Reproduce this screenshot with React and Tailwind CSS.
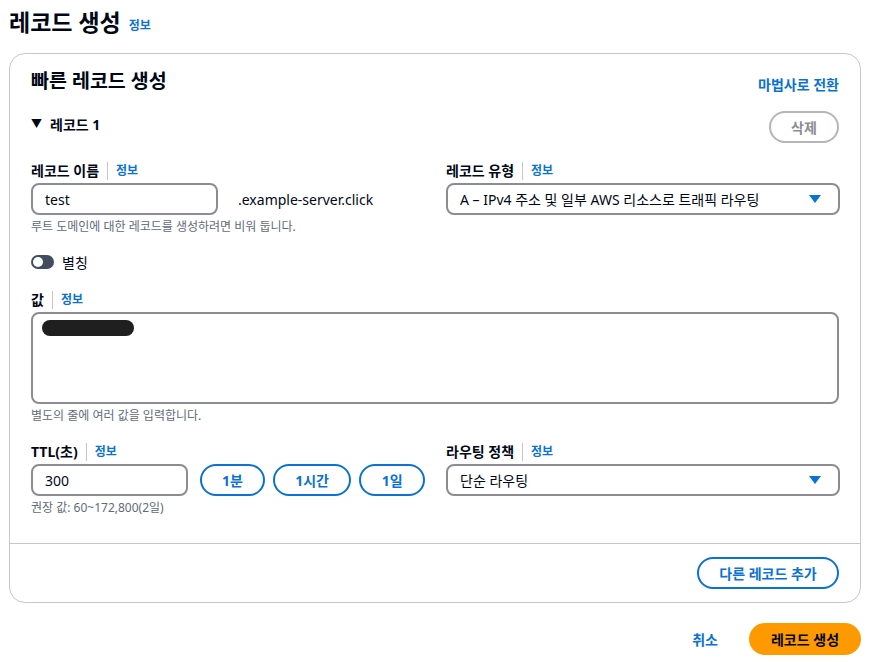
import React from 'react';

const font = { fontFamily: '"Noto Sans", "Noto Sans CJK KR", sans-serif' };

function Label({ text }) {
  return (
    <div className="flex items-center h-5 mb-[2px]">
      <span className="text-[14px] font-bold text-[#000716] leading-5">{text}</span>
      <span className="w-px h-[18px] bg-[#c6c6cd] mx-2" />
      <a className="text-[12px] font-bold text-[#0972d3] leading-5">정보</a>
    </div>
  );
}

function Caret() {
  return (
    <svg width="14" height="10" viewBox="0 0 14 10" className="shrink-0">
      <path d="M1 1h12L7 9z" fill="#0972d3" />
    </svg>
  );
}

function Select({ value }) {
  return (
    <div className="flex items-center justify-between h-8 border-2 border-[#8c8c94] rounded-lg pl-3 pr-4 text-[14px] text-[#000716]">
      <span>{value}</span>
      <Caret />
    </div>
  );
}

function PillButton({ children, className }) {
  return (
    <button
      type="button"
      className={`h-8 rounded-full border-2 border-[#0972d3] text-[#0972d3] text-[14px] font-bold flex items-center justify-center ${className}`}
    >
      {children}
    </button>
  );
}

export default function App() {
  return (
    <div className="bg-white w-[870px] min-h-[662px] px-[9px]" style={font}>
      <div className="flex items-end gap-2 pt-[3px] h-[38px]">
        <h1 className="text-[23px] font-bold text-[#000716] leading-8">레코드 생성</h1>
        <a className="text-[12px] font-bold text-[#0972d3] leading-5 mb-[2px]">정보</a>
      </div>

      <div className="mt-[15px] border border-[#c6c6cd] rounded-2xl">
        <div className="px-[21px] pt-[13px] pb-[25px]">
          <div className="flex items-center justify-between h-7">
            <h2 className="text-[19.5px] font-bold text-[#000716]">빠른 레코드 생성</h2>
            <a className="text-[14px] font-bold text-[#0972d3] mt-[6px]">마법사로 전환</a>
          </div>

          <div className="flex items-center justify-between mt-[13px] h-8">
            <div className="flex items-center gap-2 text-[14px] font-bold text-[#000716]">
              <span className="text-[11px]">▼</span>
              <span>레코드 1</span>
            </div>
            <button
              type="button"
              className="w-[70px] h-8 rounded-full border-2 border-[#b4b4bb] text-[#8c8c94] text-[14px] font-bold mt-[6px]"
            >
              삭제
            </button>
          </div>

          <div className="grid grid-cols-[394px_394px] gap-x-[21px] mt-[21px]">
            <div>
              <Label text="레코드 이름" />
              <div className="flex items-center">
                <div className="w-[187px] h-8 border-2 border-[#8c8c94] rounded-lg px-3 flex items-center text-[14px] text-[#000716]">
                  test
                </div>
                <span className="ml-[20px] text-[14px] text-[#000716]">.example-server.click</span>
              </div>
              <p className="text-[12px] text-[#5f6b7a] mt-[2px] leading-5">
                루트 도메인에 대한 레코드를 생성하려면 비워 둡니다.
              </p>
            </div>
            <div>
              <Label text="레코드 유형" />
              <Select value="A – IPv4 주소 및 일부 AWS 리소스로 트래픽 라우팅" />
            </div>
          </div>

          <div className="flex items-center gap-2 mt-[13px] h-6">
            <div className="w-[23px] h-[14px] rounded-full bg-[#414d5c] flex items-center pl-[2px]">
              <div className="w-[10px] h-[10px] rounded-full bg-white" />
            </div>
            <span className="text-[14px] text-[#000716]">별칭</span>
          </div>

          <div className="mt-[16px]">
            <Label text="값" />
            <div className="h-[92px] border-2 border-[#8c8c94] rounded-lg px-[9px] pt-[6px]">
              <div className="w-[92px] h-[16px] rounded-full bg-[#1f1f1f]" />
            </div>
            <p className="text-[12px] text-[#5f6b7a] mt-[2px] leading-5">
              별도의 줄에 여러 값을 입력합니다.
            </p>
          </div>

          <div className="grid grid-cols-[394px_394px] gap-x-[21px] mt-[16px]">
            <div>
              <Label text="TTL(초)" />
              <div className="flex items-center">
                <div className="w-[158px] h-8 border-2 border-[#8c8c94] rounded-lg px-3 flex items-center text-[14px] text-[#000716]">
                  300
                </div>
                <PillButton className="w-[65px] ml-[12px]">1분</PillButton>
                <PillButton className="w-[79px] ml-[8px]">1시간</PillButton>
                <PillButton className="w-[66px] ml-[8px]">1일</PillButton>
              </div>
              <p className="text-[12px] text-[#5f6b7a] mt-[2px] leading-5">권장 값: 60~172,800(2일)</p>
            </div>
            <div>
              <Label text="라우팅 정책" />
              <Select value="단순 라우팅" />
            </div>
          </div>
        </div>

        <div className="border-t border-[#c6c6cd] px-[21px] py-[13px] flex justify-end">
          <PillButton className="w-[142px]">다른 레코드 추가</PillButton>
        </div>
      </div>

      <div className="flex items-center justify-end gap-[31px] mt-[20px]">
        <a className="text-[14px] font-bold text-[#0972d3]">취소</a>
        <button
          type="button"
          className="w-[112px] h-8 rounded-full bg-[#ff9900] text-[#000716] text-[14px] font-bold"
        >
          레코드 생성
        </button>
      </div>
    </div>
  );
}
